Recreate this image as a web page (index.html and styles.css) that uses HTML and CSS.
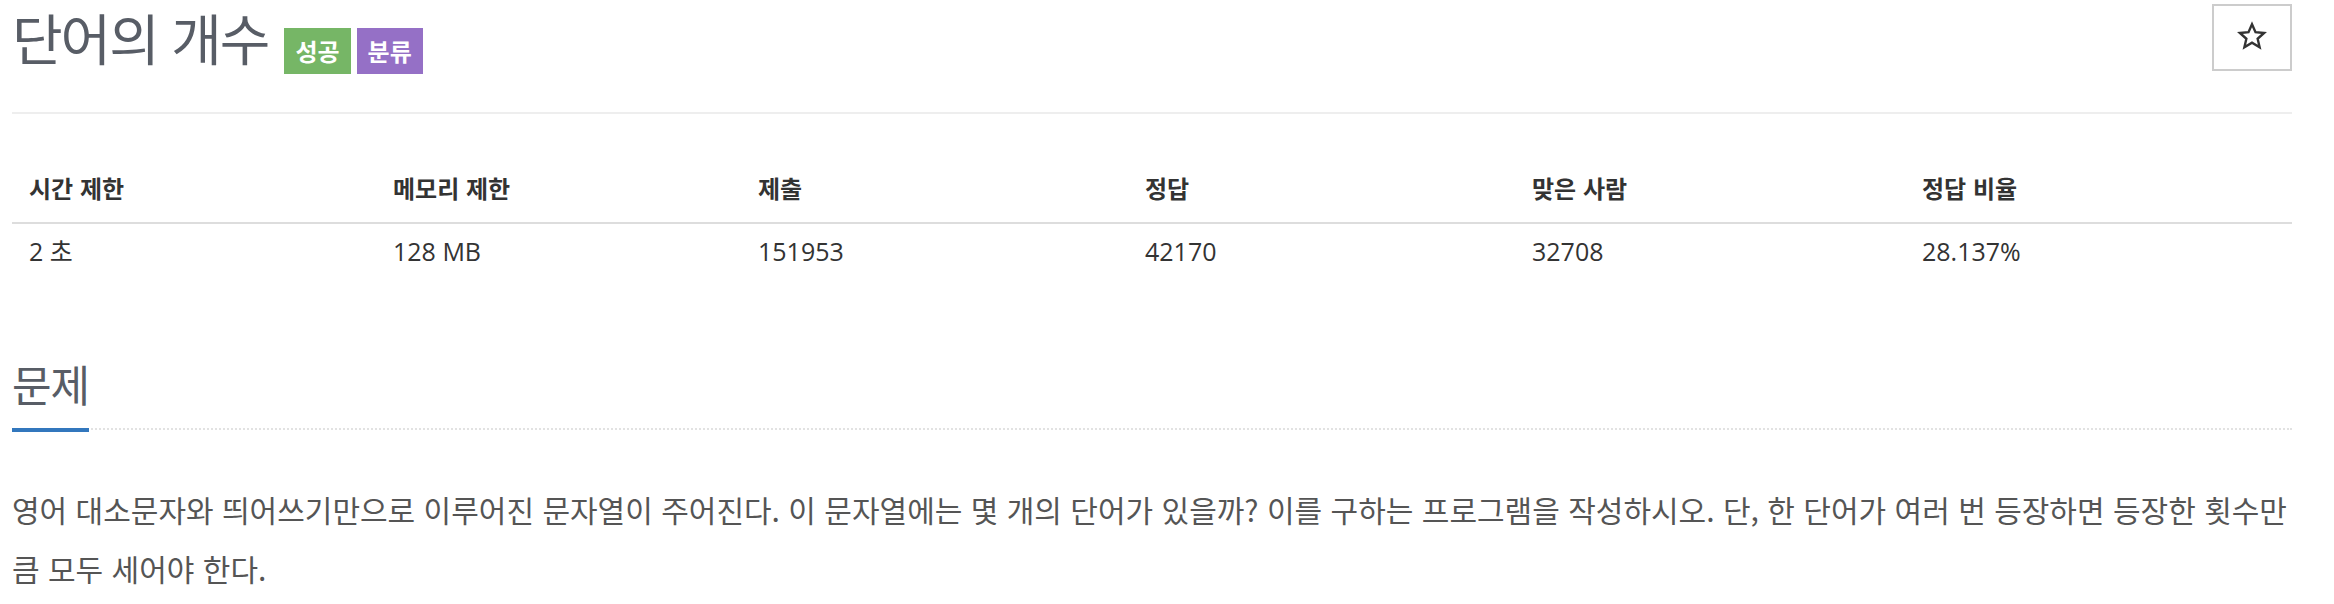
FILE: index.html
```html
<!DOCTYPE html>
<html lang="ko">
<head>
  <meta charset="UTF-8">
  <title>단어의 개수</title>
  <link rel="stylesheet" href="styles.css">
</head>
<body>
  <div class="page">
    <div class="page-header">
      <h1 class="problem-title">
        <span class="title-text">단어의 개수</span>
        <span class="label label-success">성공</span>
        <span class="label label-tag">분류</span>
      </h1>
      <button class="btn-star" title="즐겨찾기">
        <svg width="30" height="30" viewBox="0 0 24 24"><path d="M12 2.6l2.8 6.4 6.9.6-5.2 4.6 1.6 6.8L12 17.4 5.9 21l1.6-6.8-5.2-4.6 6.9-.6z" fill="none" stroke="#333" stroke-width="1.9" stroke-linejoin="miter"/></svg>
      </button>
    </div>

    <table class="problem-info">
      <thead>
        <tr>
          <th class="c1">시간 제한</th>
          <th class="c2">메모리 제한</th>
          <th class="c3">제출</th>
          <th class="c4">정답</th>
          <th class="c5">맞은 사람</th>
          <th>정답 비율</th>
        </tr>
      </thead>
      <tbody>
        <tr>
          <td>2 초 </td>
          <td>128 MB</td>
          <td>151953</td>
          <td>42170</td>
          <td>32708</td>
          <td>28.137%</td>
        </tr>
      </tbody>
    </table>

    <section class="problem-section">
      <div class="headline">
        <h2>문제</h2>
      </div>
      <div class="problem-text">
        <p>영어 대소문자와 띄어쓰기만으로 이루어진 문자열이 주어진다. 이 문자열에는 몇 개의 단어가 있을까? 이를 구하는 프로그램을 작성하시오. 단, 한 단어가 여러 번 등장하면 등장한 횟수만큼 모두 세어야 한다.</p>
      </div>
    </section>
  </div>
</body>
</html>
```

FILE: styles.css
```css
body { margin: 0; font-family: "Open Sans", "Noto Sans CJK KR", sans-serif; color: #333; background: #fff; }
.page { width: 2280px; padding: 0 12px; }

.page-header { display: flex; justify-content: space-between; align-items: flex-start; height: 112px; border-bottom: 2px solid #eee; }
.problem-title { display: flex; align-items: flex-start; gap: 6px; margin: 0; font-weight: normal; }
.title-text { font-family: "Noto Sans CJK KR", sans-serif; font-size: 55px; line-height: 72px; letter-spacing: -2px; color: #585d66; margin-right: 10px; }
.label { margin-top: 28px; height: 46px; line-height: 46px; padding: 0 11px; font-family: "Noto Sans CJK KR", sans-serif; font-size: 24px; font-weight: bold; color: #fff; }
.label-success { background-color: #76b666; }
.label-tag { background-color: #9570c6; }
.btn-star { margin-top: 4px; width: 80px; height: 67px; padding: 0; border: 2px solid #ccc; background: #fff; display: flex; align-items: center; justify-content: center; cursor: pointer; }
.btn-star svg { margin-top: -4px; }

.problem-info { width: 100%; margin-top: 40px; border-collapse: collapse; table-layout: fixed; }
.problem-info th { text-align: left; padding: 16px 0 16px 17px; line-height: 36px; font-size: 24px; font-weight: bold; border-bottom: 2px solid #ddd; font-family: "Noto Sans CJK KR", sans-serif; }
.problem-info td { padding: 12px 0 12px 17px; line-height: 30px; font-size: 25px; }
.c1 { width: 347px; }
.c2 { width: 348px; }
.c3 { width: 370px; }
.c4 { width: 370px; }
.c5 { width: 373px; }

.problem-section { margin-top: 75px; }
.headline { border-bottom: 2px dotted #e2e2e2; }
.headline h2 { display: inline-block; margin: 0 0 -4px; padding-bottom: 15px; font-family: "Noto Sans CJK KR", sans-serif; font-size: 43px; font-weight: normal; line-height: 60px; letter-spacing: -1px; color: #585d66; border-bottom: 4px solid #3277bd; }
.problem-text p { margin: 50px 0 0; font-family: "Noto Sans CJK KR", sans-serif; font-size: 30px; line-height: 59px; color: #555; }
```
